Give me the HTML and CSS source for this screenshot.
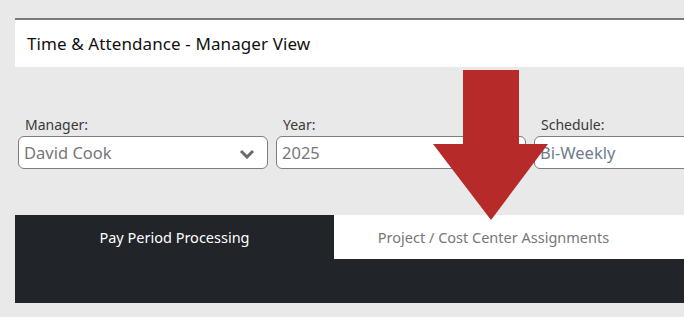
FILE: index.html
```html
<!DOCTYPE html>
<html>
<head>
<meta charset="utf-8">
<link rel="stylesheet" href="styles.css">
</head>
<body>
<div class="page">
  <header class="title-bar">Time &amp; Attendance - Manager View</header>
  <div class="filters">
    <div class="field">
      <label class="field-label">Manager:</label>
      <div class="select">
        <span class="select-value">David Cook</span>
        <svg class="chev" width="16" height="10" viewBox="0 0 16 10"><path d="M2 2 L8 8 L14 2" fill="none" stroke="#6b6b6b" stroke-width="3"/></svg>
      </div>
    </div>
    <div class="field">
      <label class="field-label">Year:</label>
      <div class="select"><span class="select-value">2025</span></div>
    </div>
    <div class="field">
      <label class="field-label">Schedule:</label>
      <div class="select"><span class="select-value blueish">Bi-Weekly</span></div>
    </div>
  </div>
  <section class="panel">
    <nav class="tabs">
      <div class="tab active">Pay Period Processing</div>
      <div class="tab">Project / Cost Center Assignments</div>
    </nav>
    <div class="panel-body"></div>
  </section>
</div>
<svg class="arrow" width="120" height="155" viewBox="0 0 120 155">
  <polygon points="30,0 86,0 86,74 115,74 58,150 0,74 30,74" fill="#b72a2a"/>
</svg>
</body>
</html>
```
FILE: styles.css
```css
html, body {
  margin: 0;
  padding: 0;
  background: #e9e9e9;
  overflow: hidden;
  width: 684px;
  height: 317px;
  font-family: "Noto Sans", sans-serif;
}
.page {
  padding: 18px 0 0 15px;
  width: 760px;
}
.title-bar {
  background: #fff;
  border-top: 2px solid #7a7a7a;
  height: 47px;
  box-sizing: content-box;
  padding-left: 12px;
  display: flex;
  align-items: center;
  font-size: 17px;
  color: #111;
  letter-spacing: 0.1px;
}
.filters {
  display: grid;
  grid-template-columns: 250px 250px 250px;
  column-gap: 8px;
  margin-top: 49px;
  margin-left: 3px;
}
.field {
  display: flex;
  flex-direction: column;
}
.field-label {
  font-size: 14px;
  color: #3a3a3a;
  padding-left: 7px;
  height: 20px;
  line-height: 18px;
}
.select {
  height: 31px;
  border: 1px solid #7d7d7d;
  border-radius: 6px;
  background: #fff;
  display: flex;
  align-items: center;
  justify-content: space-between;
  padding: 0 12px 0 5px;
}
.select-value {
  font-size: 16.5px;
  color: #777;
}
.select-value.blueish {
  color: #6f7c8c;
}
.chev {
  margin-top: 2px;
}
.panel {
  margin-top: 46px;
  background: #212428;
  height: 88px;
}
.tabs {
  display: flex;
  background: #fff;
  height: 44px;
}
.tab {
  width: 319px;
  display: flex;
  align-items: center;
  justify-content: center;
  font-size: 14.5px;
  color: #777;
}
.tab.active {
  background: #212428;
  color: #fff;
}
.arrow {
  position: absolute;
  left: 433px;
  top: 70px;
}
```
